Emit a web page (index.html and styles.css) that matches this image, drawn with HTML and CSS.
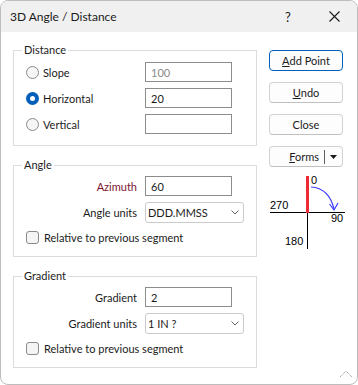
FILE: index.html
```html
<!DOCTYPE html>
<html lang="en">
<head>
    <meta charset="UTF-8">
    <meta name="viewport" content="width=device-width, initial-scale=1.0">
    <title>3D Angle / Distance</title>
    <link rel="stylesheet" href="styles.css">
</head>
<body>
    <div class="window">
        <div class="titlebar">
            <span class="title">3D Angle / Distance</span>
            <span class="caption-btn">?</span>
            <span class="caption-btn">
                <svg width="11" height="11" viewBox="0 0 11 11"><path d="M0.5 0.5 L10.5 10.5 M10.5 0.5 L0.5 10.5" stroke="#1a1a1a" stroke-width="1.1" fill="none"/></svg>
            </span>
        </div>

        <div class="content">
            <div class="groups">
                <fieldset class="group">
                    <legend>Distance</legend>
                    <div class="fields fields-first">
                        <div class="row">
                            <label class="radio"><span class="radio-mark"></span>Slope</label>
                            <input class="edit" type="text" value="100" disabled>
                        </div>
                        <div class="row">
                            <label class="radio"><span class="radio-mark checked"></span>Horizontal</label>
                            <input class="edit" type="text" value="20">
                        </div>
                        <div class="row">
                            <label class="radio"><span class="radio-mark"></span>Vertical</label>
                            <input class="edit" type="text" value="">
                        </div>
                    </div>
                </fieldset>

                <fieldset class="group">
                    <legend>Angle</legend>
                    <div class="fields">
                        <div class="row">
                            <label class="label label-required">Azimuth</label>
                            <input class="edit" type="text" value="60">
                        </div>
                        <div class="row row-combo">
                            <label class="label">Angle units</label>
                            <div class="combo">
                                <span>DDD.MMSS</span>
                                <svg width="8" height="5" viewBox="0 0 8 5"><path d="M0.5 0.5 L4 4 L7.5 0.5" stroke="#606060" fill="none"/></svg>
                            </div>
                        </div>
                        <label class="check"><span class="check-mark"></span>Relative to previous segment</label>
                    </div>
                </fieldset>

                <fieldset class="group">
                    <legend>Gradient</legend>
                    <div class="fields">
                        <div class="row">
                            <label class="label">Gradient</label>
                            <input class="edit" type="text" value="2">
                        </div>
                        <div class="row row-combo">
                            <label class="label">Gradient units</label>
                            <div class="combo">
                                <span>1 IN ?</span>
                                <svg width="8" height="5" viewBox="0 0 8 5"><path d="M0.5 0.5 L4 4 L7.5 0.5" stroke="#606060" fill="none"/></svg>
                            </div>
                        </div>
                        <label class="check"><span class="check-mark"></span>Relative to previous segment</label>
                    </div>
                </fieldset>
            </div>

            <div class="actions">
                <div class="buttons">
                    <button class="btn btn-default"><u>A</u>dd Point</button>
                    <button class="btn"><u>U</u>ndo</button>
                    <button class="btn">Close</button>
                    <button class="btn btn-split">
                        <span class="split-text"><u>F</u>orms</span>
                        <span class="split-divider"></span>
                        <span class="split-arrow">
                            <svg width="7" height="4" viewBox="0 0 7 4"><path d="M0 0 H7 L3.5 4 Z" fill="#1a1a1a"/></svg>
                        </span>
                    </button>
                </div>

                <svg class="compass" width="80" height="85" viewBox="269 170 80 85">
                    <line x1="270" y1="213.5" x2="345" y2="213.5" stroke="#000" stroke-width="1"/>
                    <line x1="307.5" y1="213" x2="307.5" y2="250" stroke="#000" stroke-width="1"/>
                    <rect x="306" y="177" width="3" height="37" fill="#ee2a36"/>
                    <path d="M311 188 Q 329 189 334 210" stroke="#3c3cff" stroke-width="1.2" fill="none"/>
                    <path d="M329.5 205 L334 211 L338 204" stroke="#3c3cff" stroke-width="1.2" fill="none"/>
                    <text x="311" y="185" class="compass-label">0</text>
                    <text x="270" y="210" class="compass-label">270</text>
                    <text x="331" y="223" class="compass-label">90</text>
                    <text x="285" y="246" class="compass-label">180</text>
                </svg>
            </div>
        </div>

        <svg class="grip" width="14" height="8" viewBox="0 0 14 8"><path d="M1 7 L7 1 L13 7" stroke="#8a8a8a" stroke-dasharray="1 1" fill="none"/></svg>
    </div>
</body>
</html>
```

FILE: styles.css
```css
* {
    box-sizing: border-box;
}

body {
    margin: 0;
    background-color: #fff;
    font-family: "Segoe UI", Lato, sans-serif;
    font-size: 11px;
    color: #1b1b1b;
}

.window {
    position: relative;
    width: 358px;
    height: 385px;
    border: 1px solid #bdbdbd;
    border-radius: 8px;
    overflow: hidden;
    background-color: #fff;
}

.titlebar {
    height: 31px;
    background-color: #f0f0f0;
    display: flex;
    align-items: center;
    padding-left: 9px;
    font-size: 12px;
}

.title {
    flex: 1;
}

.caption-btn {
    width: 46px;
    height: 31px;
    display: flex;
    align-items: center;
    justify-content: center;
    font-size: 13px;
}

.content {
    display: flex;
    padding: 10px 0 0 12px;
}

.groups {
    width: 244px;
    display: flex;
    flex-direction: column;
    gap: 11px;
}

.group {
    margin: 0;
    padding: 0 0 11px 0;
    border: 1px solid #dcdcdc;
    min-width: 0;
}

.group legend {
    margin-left: 8px;
    padding: 0 2px;
    line-height: 16px;
}

.fields {
    display: flex;
    flex-direction: column;
    gap: 6px;
    padding-top: 3px;
}

.fields-first {
    padding-top: 4px;
}

.row {
    display: flex;
    align-items: center;
    height: 20px;
}

.row-combo {
    height: 21px;
}

.radio {
    width: 131px;
    display: flex;
    align-items: center;
    gap: 4px;
    padding-left: 12px;
}

.radio-mark {
    width: 13px;
    height: 13px;
    border-radius: 50%;
    border: 1px solid #8a8a8a;
    background-color: #f6f6f6;
}

.radio-mark.checked {
    border: none;
    background-color: #005fb8;
    display: flex;
    align-items: center;
    justify-content: center;
}

.radio-mark.checked::after {
    content: "";
    width: 5px;
    height: 5px;
    border-radius: 50%;
    background-color: #fff;
}

.label {
    width: 131px;
    text-align: right;
    padding-right: 8px;
}

.label-required {
    color: #7d1431;
}

.edit {
    width: 87px;
    height: 20px;
    margin: 0;
    border: 1px solid #8c8c8c;
    border-radius: 0;
    padding: 0 5px;
    font: inherit;
    color: #1b1b1b;
    background-color: #fff;
}

.edit:disabled {
    color: #8a8a8a;
}

.combo {
    width: 99px;
    height: 21px;
    border: 1px solid #cacaca;
    border-radius: 3px;
    display: flex;
    align-items: center;
    justify-content: space-between;
    padding: 0 4px 0 2px;
}

.check {
    height: 16px;
    display: flex;
    align-items: center;
    gap: 5px;
    padding-left: 12px;
}

.check-mark {
    width: 13px;
    height: 13px;
    border: 1px solid #8a8a8a;
    border-radius: 3px;
    background-color: #f5f5f5;
}

.actions {
    width: 74px;
    margin-left: 12px;
    padding-top: 8px;
}

.buttons {
    display: flex;
    flex-direction: column;
    gap: 11px;
}

.btn {
    height: 21px;
    margin: 0;
    padding: 0;
    border: 1px solid #d2d2d2;
    border-bottom-color: #c0c0c0;
    border-radius: 4px;
    background-color: #fdfdfd;
    font: inherit;
    color: #1b1b1b;
    display: flex;
    align-items: center;
    justify-content: center;
}

.btn-default {
    border: 1px solid #005fb8;
}

.btn-split {
    justify-content: flex-end;
}

.split-text {
    padding-right: 5px;
}

.split-divider {
    width: 1px;
    height: 14px;
    background-color: #606060;
}

.split-arrow {
    width: 17px;
    display: flex;
    justify-content: center;
}

.compass {
    display: block;
    margin-top: 2px;
}

.compass-label {
    font-family: "Liberation Sans", Arial, sans-serif;
    font-size: 11px;
    fill: #000;
}

.grip {
    position: absolute;
    right: 4px;
    bottom: 6px;
}
```
